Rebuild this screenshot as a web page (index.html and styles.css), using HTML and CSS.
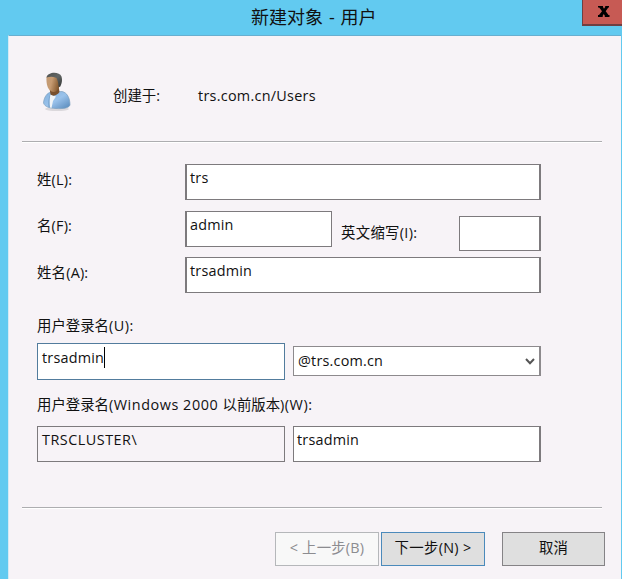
FILE: index.html
```html
<!DOCTYPE html>
<html lang="zh-CN">
<head>
<meta charset="utf-8">
<title>新建对象 - 用户</title>
<link rel="stylesheet" href="styles.css">
</head>
<body>
<div class="window">
  <header class="titlebar">
    <h1 class="title">新建对象 - 用户</h1>
    <button class="close" aria-label="关闭">
      <svg width="12" height="11" viewBox="0 0 12 11"><path d="M0 0H5V1L6 2.800 7.200 1V0H11V1.500H10.300L7.700 5.200 10.500 9H11.500V11H6.800V9.800L5.800 8 4.700 9.800V11H0V9H1L4 5.300 1.200 1.500H0Z"/></svg>
    </button>
  </header>
  <main class="body">
    <section class="intro">
      <svg class="avatar" width="30" height="40" viewBox="0 0 30 40">
        <defs>
          <linearGradient id="skin" x1="0" y1="0" x2="1" y2="0.3"><stop offset="0" stop-color="#c39a75"/><stop offset=".45" stop-color="#c69b72"/><stop offset="1" stop-color="#85592f"/></linearGradient>
          <linearGradient id="hair" x1="0" y1="0" x2="1" y2="1"><stop offset="0" stop-color="#4f5150"/><stop offset=".5" stop-color="#626665"/><stop offset="1" stop-color="#343635"/></linearGradient>
          <linearGradient id="shirt" x1="0" y1="0" x2="1" y2="1"><stop offset="0" stop-color="#84b1dd"/><stop offset=".5" stop-color="#9ac2eb"/><stop offset="1" stop-color="#5587b9"/></linearGradient>
        </defs>
        <ellipse cx="15" cy="37" rx="12" ry="2" fill="#dbd8dc"/>
        <path d="M1.500 31C2 25 5 21 9 20L20 19.500C25 20.500 28 26 28 33C27 36 21 37 14 36.500C7 36 3 35 1.500 31Z" fill="url(#shirt)" stroke="#7b9fbe" stroke-width=".7"/>
        <path d="M8 22.500C10 26 9 31 9.500 36L6.500 35C6 31 6 27 8 22.500Z" fill="#79a5d0"/>
        <path d="M8.500 22.500L14 24.500 11 29 9.500 36 8 35.500C7.500 31 7.500 26 8.500 22.500Z" fill="#f1f4f7"/>
        <path d="M7.500 16L16.500 14 17.500 20C15.500 23 11.500 25 8.500 22.500Z" fill="#79502d"/>
        <path d="M4.500 5C7 2 17 2 18 8C18.500 13 16.500 20 11.500 20C6 19 4 13 4.500 5Z" fill="url(#skin)"/>
        <path d="M4.500 5.500C6 -.500 17.500 -.500 19.500 4.500C20.500 8 20 12 18 15L16.500 14.500C16.500 11 15.500 8 14.500 6C11 4.500 8 4.500 4.500 5.500Z" fill="url(#hair)"/>
      </svg>
      <span class="intro-label">创建于:</span>
      <span class="path">trs.com.cn/Users</span>
    </section>
    <div class="rule"></div>
    <section class="form">
      <div class="row">
        <span class="label">姓(L):</span>
        <div class="field">trs</div>
      </div>
      <div class="row row-given">
        <span class="label">名(F):</span>
        <div class="field given">admin</div>
        <span class="label-initials">英文缩写(I):</span>
        <div class="field initials"></div>
      </div>
      <div class="row">
        <span class="label">姓名(A):</span>
        <div class="field">trsadmin</div>
      </div>
      <div class="caption logon">用户登录名<span class="key">(U):</span></div>
      <div class="pair">
        <div class="field focused">trsadmin<span class="caret"></span></div>
        <div class="select"><span>@trs.com.cn</span>
          <svg width="10" height="7" viewBox="0 0 10 7"><path d="M1 1L5 5.200 9 1" fill="none" stroke="#555" stroke-width="2"/></svg>
        </div>
      </div>
      <div class="caption legacy">用户登录名<span class="latin">(Windows 2000 </span>以前版本<span class="key">)(W):</span></div>
      <div class="pair">
        <div class="field domain">TRSCLUSTER\</div>
        <div class="field short">trsadmin</div>
      </div>
    </section>
    <div class="rule"></div>
    <footer class="actions">
      <button class="btn back" disabled>&lt; 上一步(B)</button>
      <button class="btn next">下一步(N) &gt;</button>
      <button class="btn cancel">取消</button>
    </footer>
  </main>
</div>
</body>
</html>
```
FILE: styles.css
```css
* { box-sizing: border-box; }
body {
  margin: 0;
  overflow: hidden;
  font: 14.4px/20px "Open Sans", "Noto Sans CJK SC", sans-serif;
  color: #111;
}
.window { height: 579px; background: #62caf0; display: flex; flex-direction: column; }
.titlebar { height: 35px; display: grid; grid-template-columns: 582px 40px; align-items: start; }
.title { margin: 5px 0 0 251px; font-size: 18px; line-height: 24px; font-weight: 400; white-space: nowrap; word-spacing: 1.2px; }
.close {
  height: 26px; padding: 0 0 1px 2px;
  display: flex; align-items: center; justify-content: center;
  background: #c75a54; border: solid #703f42; border-width: 0 0 2px 1px;
}
.body {
  flex: 1; margin: 0 1px 0 8px; padding: 0 19px 0 14px;
  background: #f7f3f7; border-top: 1px solid #68afd0; border-left: 1px solid #d6eaf4;
}
.intro { height: 105px; display: flex; align-items: center; padding-left: 19px; }
.avatar { margin-top: 7px; }
.intro-label { width: 85px; margin-left: 41px; margin-top: 14px; }
.path { margin-top: 14px; letter-spacing: .27px; }
.rule { height: 2px; margin-left: -1px; border-top: 1px solid #adadb0; border-bottom: 1px solid #fff; }
.form { height: 364px; width: 518px; padding: 21px 0 0 14px; }
.row { display: grid; grid-template-columns: 148px 356px; height: 36px; margin-bottom: 11px; }
.row-given { grid-template-columns: 148px 147px 127px 82px; margin-bottom: 10px; }
.label { padding-top: 6px; letter-spacing: .2px; }
.row-given .label { padding-top: 5px; }
.label-initials { padding: 12px 0 0 9px; letter-spacing: .3px; }
.field { height: 36px; padding: 4px 3px; background: #fff; border: 1px solid #7d7a7d; white-space: nowrap; letter-spacing: .2px; }
.row .field { border-left-width: 2px; padding-top: 3px; }
.row .field:not(.given) { border-right-width: 2px; }
.row .initials { margin-top: 5px; border-left-width: 1px; height: 35px; }
.caption { height: 20px; white-space: nowrap; }
.logon { margin-top: 23px; margin-bottom: 7px; }
.key { letter-spacing: .5px; }
.latin { letter-spacing: .55px; }
.pair { display: grid; grid-template-columns: 248px 248px; gap: 8px; align-items: start; }
.focused { height: 37px; border-color: #527c9d; display: flex; padding-left: 4px; }
.caret { width: 1px; height: 21px; background: #000; margin-top: -1px; }
.select {
  height: 30px; margin-top: 3px; padding: 0 4px;
  display: flex; align-items: center; justify-content: space-between;
  background: #fff; border: 1px solid #8d8a8d; border-right-width: 2px;
  letter-spacing: .2px;
}
.legacy { margin: 15px 0 11px; }
.pair .domain { background: #f7f3f7; letter-spacing: .5px; padding: 3px 4px; }
.pair .short { border-right-width: 2px; padding-top: 3px; }
.actions { display: flex; padding: 23px 0 0 252px; width: 600px; }
.btn {
  width: 104px; height: 34px; padding: 0 0 2px; margin-right: 2px;
  font: inherit; color: #111; background: #dfdfdf; border: 1px solid #858386;
  white-space: nowrap;
}
.back { color: #8c8c90; background: #f8f8f8; border-color: #b5b7ba; letter-spacing: .2px; }
.next { border-color: #4b8abb; margin-right: 17px; letter-spacing: .3px; }
.cancel { width: 103px; }
```
